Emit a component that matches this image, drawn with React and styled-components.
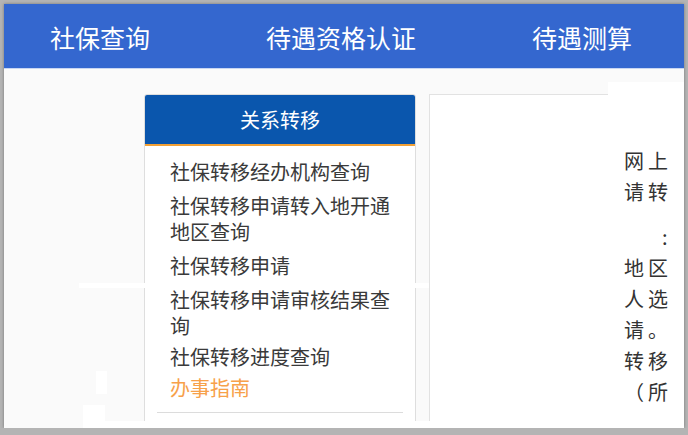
import React from "react";
import styled, { createGlobalStyle } from "styled-components";

const GlobalStyle = createGlobalStyle`
  html, body {
    margin: 0;
    padding: 0;
    background: #b4b4b4;
  }
  body {
    font-family: "Noto Sans CJK SC", "Noto Sans", sans-serif;
  }
`;

const Frame = styled.div`
  position: relative;
  width: 680px;
  height: 424px;
  margin: 4px 0 0 4px;
  background: #fafafa;
  overflow: hidden;
  box-shadow: 0 0 3px rgba(0, 0, 0, 0.35);
`;

const TopBar = styled.nav`
  display: flex;
  align-items: center;
  gap: 116px;
  height: 62px;
  padding: 2px 0 0 46px;
  background: #3467cf;
  border-bottom: 1px solid #c8d6f2;
`;

const NavItem = styled.a`
  color: #fff;
  font-size: 25px;
  line-height: 30px;
  white-space: nowrap;
  text-decoration: none;
`;

const Main = styled.div`
  display: flex;
  align-items: flex-start;
  height: 360px;
  padding-left: 140px;
`;

const Sidebar = styled.aside`
  flex: none;
  width: 270px;
  height: 340px;
  margin-top: 25px;
  background: #fff;
  border: 1px solid #dedede;
  border-radius: 3px 3px 0 0;
`;

const SideTitle = styled.div`
  height: 49px;
  line-height: 49px;
  text-align: center;
  font-size: 20px;
  color: #fff;
  background: #0a56ad;
  border-bottom: 2px solid #f2a035;
  border-radius: 2px 2px 0 0;
`;

const LinkList = styled.ul`
  list-style: none;
  margin: 0;
  padding: 13px 15px 0 25px;
`;

const LinkItem = styled.li`
  margin-top: ${(p) => (p.$gap ? p.$gap : 8)}px;
  font-size: 20px;
  line-height: 26px;
  color: ${(p) => (p.$accent ? "#f7a14a" : "#3a3a3a")};

  &:first-child {
    margin-top: 0;
  }
`;

const Divider = styled.hr`
  margin: 11px 12px 0;
  border: none;
  border-top: 1px solid #dcdcdc;
`;

const ContentPanel = styled.section`
  flex: none;
  width: 178px;
  height: 340px;
  margin: 25px 0 0 13px;
  background: #fff;
  border: 1px solid #e2e2e2;
  border-right: none;
`;

const TextColumn = styled.div`
  flex: none;
  width: 61px;
  height: 360px;
  margin-top: 13px;
  padding: 63px 0 0 16px;
  background: #fff;
  overflow: hidden;
`;

const TextLine = styled.p`
  margin: ${(p) => (p.$space ? p.$space : 0)}px 0 0;
  font-size: 20px;
  line-height: 31px;
  letter-spacing: 4px;
  color: #333;
  white-space: nowrap;
  text-indent: ${(p) => (p.$indent ? p.$indent : 0)}px;
`;

const Glitch = styled.div`
  position: absolute;
  background: #fff;
  left: ${(p) => p.$x}px;
  top: ${(p) => p.$y}px;
  width: ${(p) => p.$w}px;
  height: ${(p) => p.$h}px;
`;

const links = [
  { text: "社保转移经办机构查询" },
  { text: "社保转移申请转入地开通地区查询" },
  { text: "社保转移申请" },
  { text: "社保转移申请审核结果查询" },
  { text: "社保转移进度查询", gap: 5 },
  { text: "办事指南", gap: 5, accent: true },
];

export default function App() {
  return (
    <>
      <GlobalStyle />
      <Frame>
        <TopBar>
          <NavItem>社保查询</NavItem>
          <NavItem>待遇资格认证</NavItem>
          <NavItem>待遇测算</NavItem>
        </TopBar>
        <Main>
          <Sidebar>
            <SideTitle>关系转移</SideTitle>
            <LinkList>
              {links.map((l) => (
                <LinkItem key={l.text} $gap={l.gap} $accent={l.accent}>
                  {l.text}
                </LinkItem>
              ))}
            </LinkList>
            <Divider />
          </Sidebar>
          <ContentPanel />
          <TextColumn>
            <TextLine>网上</TextLine>
            <TextLine>请转</TextLine>
            <TextLine $space={14} $indent={38}>:</TextLine>
            <TextLine>地区</TextLine>
            <TextLine>人选</TextLine>
            <TextLine>请。</TextLine>
            <TextLine>转移</TextLine>
            <TextLine>（所</TextLine>
          </TextColumn>
        </Main>
        <Glitch $x={75} $y={279} $w={350} $h={5} />
        <Glitch $x={92} $y={367} $w={11} $h={23} />
        <Glitch $x={79} $y={401} $w={22} $h={23} />
        <Glitch $x={79} $y={417} $w={601} $h={7} />
      </Frame>
    </>
  );
}
